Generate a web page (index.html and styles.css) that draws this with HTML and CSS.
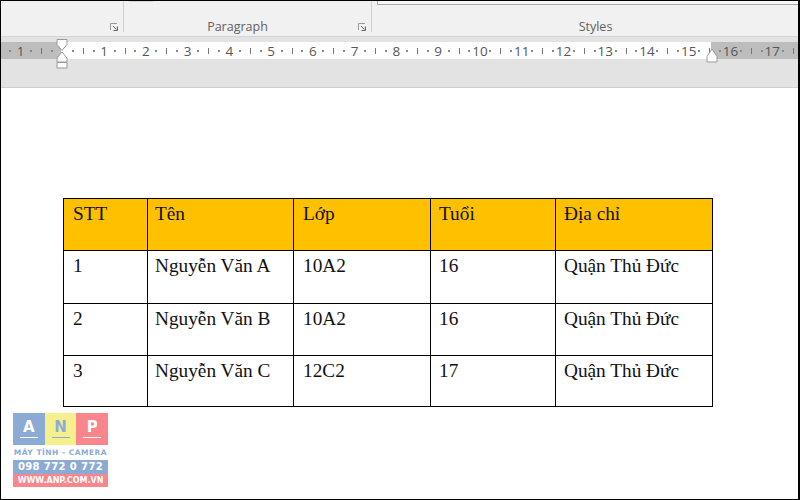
FILE: index.html
```html
<!DOCTYPE html>
<html lang="vi">
<head>
<meta charset="utf-8">
<title>Word table</title>
<link rel="stylesheet" href="styles.css">
</head>
<body>
<div class="window">
  <header class="ribbon">
    <section class="group group-font">
      <svg class="launcher" width="8" height="8" viewBox="0 0 8 8"><path d="M.5 7V.5H7" fill="none" stroke="#9a9a9a"/><path d="M3 3l3.500 3.500M3.500 7.500h4v-4" fill="none" stroke="#666"/></svg>
    </section>
    <section class="group group-para">
      <span class="stub"></span>
      <span class="label">Paragraph</span>
      <svg class="launcher" width="8" height="8" viewBox="0 0 8 8"><path d="M.5 7V.5H7" fill="none" stroke="#9a9a9a"/><path d="M3 3l3.500 3.500M3.500 7.500h4v-4" fill="none" stroke="#666"/></svg>
    </section>
    <section class="group group-styles">
      <span class="gallery"></span>
      <span class="label">Styles</span>
    </section>
  </header>
  <div class="ruler-band">
    <div class="ruler">
      <i class="d"></i><b>1</b><i class="d"></i><i class="t"></i><i class="d"></i><b></b>
      <i class="d"></i><i class="t"></i><i class="d"></i><b>1</b>
      <i class="d"></i><i class="t"></i><i class="d"></i><b>2</b>
      <i class="d"></i><i class="t"></i><i class="d"></i><b>3</b>
      <i class="d"></i><i class="t"></i><i class="d"></i><b>4</b>
      <i class="d"></i><i class="t"></i><i class="d"></i><b>5</b>
      <i class="d"></i><i class="t"></i><i class="d"></i><b>6</b>
      <i class="d"></i><i class="t"></i><i class="d"></i><b>7</b>
      <i class="d"></i><i class="t"></i><i class="d"></i><b>8</b>
      <i class="d"></i><i class="t"></i><i class="d"></i><b>9</b>
      <i class="d"></i><i class="t"></i><i class="d"></i><b>10</b>
      <i class="d"></i><i class="t"></i><i class="d"></i><b>11</b>
      <i class="d"></i><i class="t"></i><i class="d"></i><b>12</b>
      <i class="d"></i><i class="t"></i><i class="d"></i><b>13</b>
      <i class="d"></i><i class="t"></i><i class="d"></i><b>14</b>
      <i class="d"></i><i class="t"></i><i class="d"></i><b>15</b>
      <i class="d"></i><i class="t"></i><i class="d"></i><b>16</b>
      <i class="d"></i><i class="t"></i><i class="d"></i><b>17</b>
      <i class="d"></i><i class="t"></i>
    </div>
    <svg class="marker marker-left" width="12" height="30" viewBox="0 0 12 30"><path d="M1 .5h10v5l-5 6-5-6z" fill="#fff" stroke="#9a9a9a"/><path d="M6 13l5 6v4H1v-4z" fill="#fff" stroke="#9a9a9a"/><path d="M1 23.500h10v5.500H1z" fill="#fff" stroke="#9a9a9a"/></svg>
    <svg class="marker marker-right" width="12" height="15" viewBox="0 0 12 15"><path d="M6 1l5 7.500v5.500H1V8.500z" fill="#fff" stroke="#9a9a9a"/></svg>
  </div>
  <main class="doc">
    <table class="sheet">
      <colgroup>
        <col class="c1"><col class="c2"><col class="c3"><col class="c4"><col class="c5">
      </colgroup>
      <thead>
        <tr class="r-head"><th>STT</th><th>Tên</th><th>Lớp</th><th>Tuổi</th><th>Địa chỉ</th></tr>
      </thead>
      <tbody>
        <tr class="r1"><td>1</td><td>Nguyễn Văn A</td><td>10A2</td><td>16</td><td>Quận Thủ Đức</td></tr>
        <tr class="r2"><td>2</td><td>Nguyễn Văn B</td><td>10A2</td><td>16</td><td>Quận Thủ Đức</td></tr>
        <tr class="r3"><td>3</td><td>Nguyễn Văn C</td><td>12C2</td><td>17</td><td>Quận Thủ Đức</td></tr>
      </tbody>
    </table>
    <div class="logo">
      <div class="tiles">
        <span class="tile tile-a"><span class="letter">A</span></span>
        <span class="tile tile-n"><span class="letter">N</span></span>
        <span class="tile tile-p"><span class="letter">P</span></span>
      </div>
      <div class="tagline">MÁY TÍNH - CAMERA</div>
      <div class="phone">098 772 0 772</div>
      <div class="web">WWW.ANP.COM.VN</div>
    </div>
  </main>
</div>
</body>
</html>
```

FILE: styles.css
```css
* { box-sizing: border-box; }
html, body { margin: 0; padding: 0; }
body { width: 800px; height: 500px; overflow: hidden; background: #fff; }

.window {
  width: 800px;
  height: 500px;
  position: relative;
  display: flex;
  flex-direction: column;
  border: 1px solid #000;
  border-right-width: 2px;
  background: #fff;
}

/* ribbon */
.ribbon {
  height: 36px;
  display: flex;
  background: #f1f1f1;
  border-bottom: 1px solid #d4d4d4;
  font-family: "Open Sans", "Noto Sans", sans-serif;
  color: #616161;
}
.group {
  height: 31px;
  position: relative;
  display: flex;
  justify-content: center;
  align-items: flex-end;
  border-right: 1px solid #cfcfcf;
}
.group-font { width: 123px; }
.group-para { width: 248px; padding-right: 20px; }
.group-styles { flex: 1; border-right: 0; padding-left: 21px; }
.label { font-size: 12.500px; line-height: 17px; margin-bottom: -3px; }
.launcher { position: absolute; right: 5px; bottom: 1px; }
.stub { position: absolute; left: 5px; top: 0; width: 24px; height: 1px; background: #d8d8d8; }
.gallery {
  position: absolute;
  left: 5px;
  right: 0;
  top: 0;
  height: 4px;
  border: 1px solid #a8a8a8;
  border-top: 0;
  border-right: 0;
  background: #f6f6f6;
}

/* ruler */
.ruler-band {
  height: 51px;
  position: relative;
  background: #e3e3e3;
  border-bottom: 1px solid #cfcfcf;
  padding-top: 5px;
}
.ruler {
  height: 17px;
  display: flex;
  align-items: center;
  padding-left: 4px;
  background: linear-gradient(to right, #bdbdbd 0, #bdbdbd 60px, #fff 60px, #fff 710px, #bdbdbd 710px);
  font-family: "Open Sans", "Noto Sans", sans-serif;
  font-size: 13.500px;
  color: #565656;
  overflow: hidden;
}
.ruler i, .ruler b {
  flex: 0 0 10.450px;
  width: 10.450px;
  display: flex;
  justify-content: center;
  align-items: center;
  font-style: normal;
  font-weight: 400;
  white-space: nowrap;
}
.ruler .d::before { content: ""; width: 2px; height: 2px; background: #888; }
.ruler .t::before { content: ""; width: 1px; height: 6px; background: #777; }
.marker { position: absolute; }
.marker-left { left: 55px; top: 2px; }
.marker-right { left: 705px; top: 11px; }

/* document */
.doc {
  flex: 1;
  background: #fff;
  padding: 110px 0 0 12px;
}
.sheet {
  margin-left: 50px;
  width: 649px;
  table-layout: fixed;
  border-collapse: collapse;
  font-family: "Liberation Serif", "Times New Roman", serif;
  font-size: 19.300px;
  color: #111;
}
.c1 { width: 84px; }
.c2 { width: 146px; }
.c3 { width: 137px; }
.c4 { width: 125px; }
.c5 { width: 157px; }
.sheet th, .sheet td {
  border: 1px solid #000;
  padding: 4px 8px 0;
  vertical-align: top;
  text-align: left;
  font-weight: 400;
  line-height: 22px;
}
.sheet th:nth-child(1), .sheet td:nth-child(1) { padding-left: 9px; }
.sheet th:nth-child(2), .sheet td:nth-child(2) { padding-left: 7px; }
.sheet th:nth-child(3), .sheet td:nth-child(3) { padding-left: 9px; }
.sheet th { background: #ffc000; }
.r-head { height: 52px; }
.r1 { height: 53px; }
.r2 { height: 52px; }
.r3 { height: 51px; }

/* logo */
.logo {
  width: 95px;
  margin-top: 6px;
  font-family: "DejaVu Sans", "Liberation Sans", sans-serif;
  font-weight: 700;
  text-align: center;
  white-space: nowrap;
}
.tiles { display: flex; height: 32px; }
.tile {
  flex: 1;
  display: flex;
  justify-content: center;
  align-items: flex-start;
  padding-top: 6px;
  color: #fff;
}
.letter {
  width: 18px;
  height: 19px;
  font-size: 15px;
  font-weight: 700;
  line-height: 16px;
  border-bottom: 1px solid currentColor;
}
.letter::first-letter { letter-spacing: 0; }
.tile-a { background: #8cabd4; }
.tile-n { background: #f6ef8e; color: #8cabd4; }
.tile-p { background: #f9868c; }
.tagline {
  height: 15px;
  font-size: 7.500px;
  line-height: 15px;
  color: #8cabd4;
  letter-spacing: .5px;
}
.phone {
  height: 14px;
  background: #8cabd4;
  color: #fff;
  font-size: 10px;
  line-height: 14px;
  letter-spacing: .4px;
}
.web {
  height: 13px;
  background: #f9868c;
  color: #fff;
  font-size: 8px;
  line-height: 13px;
}
```
